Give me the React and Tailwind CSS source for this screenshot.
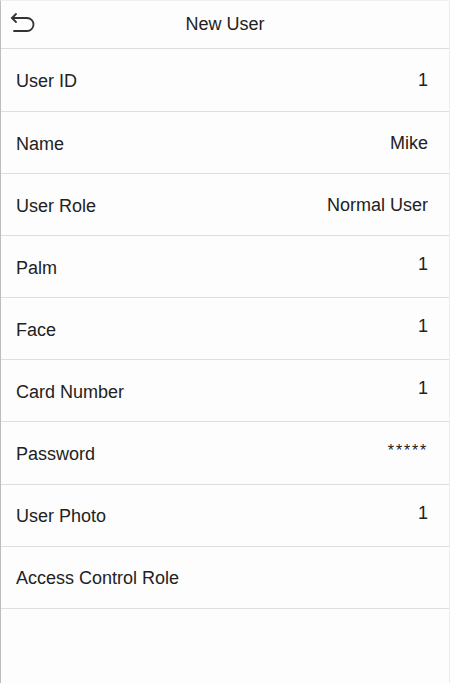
import React from 'react';

const rows = [
  { label: 'User ID', value: '1', lift: false },
  { label: 'Name', value: 'Mike', lift: false },
  { label: 'User Role', value: 'Normal User', lift: false },
  { label: 'Palm', value: '1', lift: true },
  { label: 'Face', value: '1', lift: true },
  { label: 'Card Number', value: '1', lift: true },
  { label: 'Password', value: '*****', stars: true },
  { label: 'User Photo', value: '1', lift: true },
  { label: 'Access Control Role', value: '' },
];

const BackIcon = () => (
  <svg width="26" height="24" viewBox="0 0 26 24" fill="none" stroke="#333" strokeWidth="1.8" strokeLinecap="round" strokeLinejoin="round">
    <path d="M2 6H17a6.5 6.5 0 0 1 0 13H4" />
    <path d="M6 2L2 6L6 10" />
  </svg>
);

export default function App() {
  return (
    <div
      className="w-[450px] h-[683px] bg-[#fdfdfd] border-l border-l-[#bdbdbd] border-r border-r-[#ececec] border-t border-t-[#f0f0f0] flex flex-col text-[#222]"
      style={{ fontFamily: '"Liberation Sans", Arial, sans-serif' }}
    >
      <div className="h-[48px] shrink-0 relative flex items-center justify-center border-b border-[#dcdcdc]">
        <div className="absolute left-[9px] top-[11px]">
          <BackIcon />
        </div>
        <span className="text-[18px]">New User</span>
      </div>
      {rows.map((r, i) => (
        <div
          key={r.label}
          className={`${i === 0 ? 'h-[63px]' : 'h-[62.1px]'} shrink-0 flex items-center justify-between pl-[15px] pr-[21px] border-b border-[#dedede]`}
        >
          <span className="text-[18px] pt-[3px]">{r.label}</span>
          {r.stars ? (
            <span className="text-[16px] tracking-[1.8px] -mt-[5px]">{r.value}</span>
          ) : (
            <span className={`text-[18px] ${r.lift ? '-mt-[4px]' : 'mt-[1px]'}`}>{r.value}</span>
          )}
        </div>
      ))}
    </div>
  );
}
